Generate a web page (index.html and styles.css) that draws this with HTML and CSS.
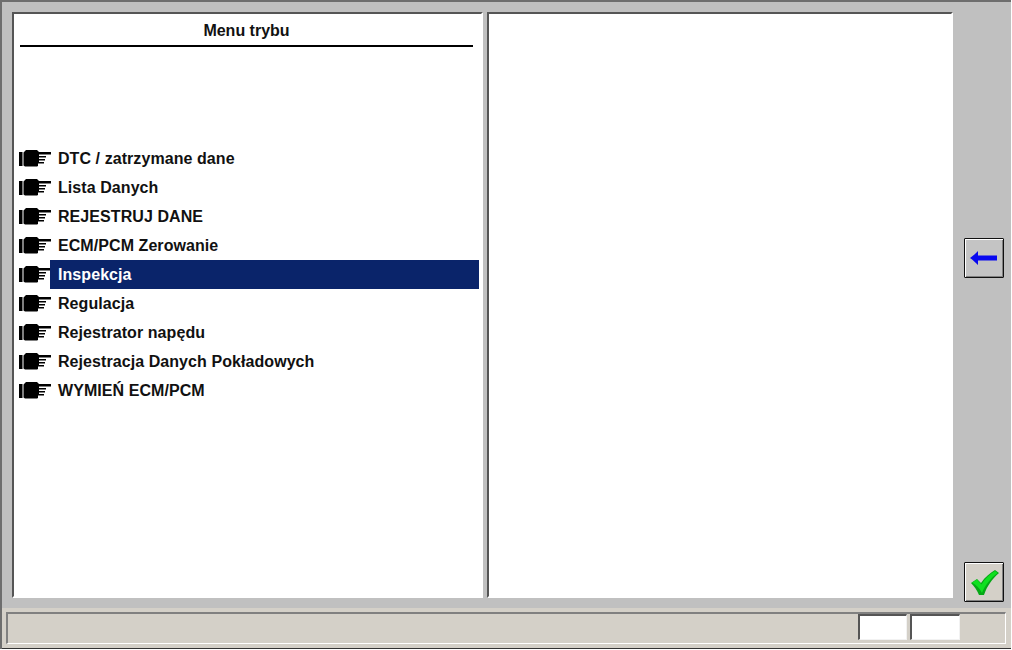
FILE: index.html
```html
<!DOCTYPE html>
<html lang="pl">
<head>
<meta charset="utf-8">
<title>Menu trybu</title>
<link rel="stylesheet" href="styles.css">
</head>
<body>
<svg class="defs" width="0" height="0" aria-hidden="true">
  <symbol id="hand" viewBox="0 0 33 18">
    <path d="M0 3h3.500v14H0zM4.500 3.500L7 1h11l2 2h12v2.500H20V7h7v1.500h-7V10h6v1.500h-6V13h5v1.500h-6V17l-1 .500H6l-1.500-1z" fill="#000"/>
  </symbol>
</svg>
<div class="window">
  <div class="main">
    <section class="panel panel-left">
      <h1 class="title">Menu trybu</h1>
      <ul class="menu">
        <li class="item"><svg class="hand"><use href="#hand"/></svg><span class="label">DTC / zatrzymane dane</span></li>
        <li class="item"><svg class="hand"><use href="#hand"/></svg><span class="label">Lista Danych</span></li>
        <li class="item"><svg class="hand"><use href="#hand"/></svg><span class="label">REJESTRUJ DANE</span></li>
        <li class="item"><svg class="hand"><use href="#hand"/></svg><span class="label">ECM/PCM Zerowanie</span></li>
        <li class="item"><svg class="hand"><use href="#hand"/></svg><span class="label selected">Inspekcja</span></li>
        <li class="item"><svg class="hand"><use href="#hand"/></svg><span class="label">Regulacja</span></li>
        <li class="item"><svg class="hand"><use href="#hand"/></svg><span class="label">Rejestrator napędu</span></li>
        <li class="item"><svg class="hand"><use href="#hand"/></svg><span class="label">Rejestracja Danych Pokładowych</span></li>
        <li class="item"><svg class="hand"><use href="#hand"/></svg><span class="label">WYMIEŃ ECM/PCM</span></li>
      </ul>
    </section>
    <section class="panel panel-right"></section>
    <aside class="side">
      <button class="btn" type="button" aria-label="Wstecz">
        <svg width="28" height="16" viewBox="0 0 28 16"><path d="M0 8c3-2 5-4 8-7v4.500h19v5H8V15C5 12 3 10 0 8z" fill="#0808f0"/></svg>
      </button>
      <button class="btn btn-ok" type="button" aria-label="OK">
        <svg width="32" height="28" viewBox="0 0 32 28"><path d="M3 15l6-4 4 4C17 9 22 5 27 2l4 3C24 11 19 18 16 27h-5C9 22 6 18 3 15z" fill="#06a816"/><path d="M4 14.500l5-3 4.500 5C17 10.500 22 6 27 3l2.500 2C23 10 17 17 14 25 11.500 20 8 17 4 14.500z" fill="#10e020"/></svg>
      </button>
    </aside>
  </div>
  <footer class="statusbar">
    <div class="status">
      <div class="field"></div>
      <div class="field field-wide"></div>
    </div>
  </footer>
</div>
</body>
</html>
```
FILE: styles.css
```css
* { box-sizing: border-box; }
html, body { margin: 0; padding: 0; }
body { width: 1012px; height: 650px; overflow: hidden; background: #fff; font-family: "Liberation Sans", Arial, sans-serif; }
.defs { display: block; height: 0; }
.window {
  width: 1011px;
  height: 649px;
  display: flex;
  flex-direction: column;
  background: #c0c0c0;
  border-top: 2px solid #6e6e6e;
  border-left: 2px solid #6e6e6e;
}
.main {
  flex: 1;
  display: flex;
  padding: 10px 0 10px 10px;
  gap: 4px;
  min-height: 0;
}
.panel {
  background: #fff;
  border-top: 2px solid #555;
  border-left: 2px solid #555;
  border-right: 2px solid #fff;
  border-bottom: 2px solid #fff;
}
.panel-left { width: 471px; }
.panel-right { width: 466px; }
.title {
  margin: 0 8px 0 6px;
  height: 33px;
  line-height: 33px;
  font-size: 16px;
  font-weight: 700;
  text-align: center;
  color: #111;
  border-bottom: 2px solid #000;
}
.menu { list-style: none; margin: 97px 0 0; padding: 0 2px 0 5px; }
.item { display: flex; align-items: center; height: 29px; }
.hand { width: 33px; height: 18px; flex: none; margin: 0 -2px 1px 0; }
.label {
  flex: 1;
  height: 29px;
  line-height: 29px;
  padding-left: 8px;
  font-size: 16px;
  font-weight: 700;
  letter-spacing: 0.07px;
  color: #111;
  white-space: nowrap;
}
.selected { background: #0a246a; color: #fff; }
.side {
  flex: 1;
  display: flex;
  flex-direction: column;
  justify-content: space-between;
  align-items: flex-start;
  padding: 226px 0 0 7px;
}
.btn {
  width: 40px;
  height: 40px;
  padding: 0;
  display: flex;
  align-items: center;
  justify-content: center;
  background: #c4c4c4;
  border: 1px solid #111;
  box-shadow: inset 1px 1px 0 #fff, inset -1px -1px 0 #808080;
  border-radius: 1px;
}
.btn-ok { background: #d4d0c8; margin-bottom: -4px; }
.statusbar {
  height: 41px;
  flex: none;
  background: #d4d0c8;
  padding: 4px 5px 4px 4px;
  border-bottom: 1px solid #333;
}
.status {
  height: 32px;
  border-top: 2px solid #808080;
  border-left: 2px solid #808080;
  border-right: 1px solid #fff;
  border-bottom: 1px solid #fff;
  display: flex;
  justify-content: flex-end;
  gap: 3px;
  padding: 0 45px 0 0;
}
.field {
  width: 49px;
  height: 26px;
  background: #fff;
  border-top: 2px solid #555;
  border-left: 2px solid #555;
  border-right: 1px solid #f2f2f2;
  border-bottom: 1px solid #f2f2f2;
}
.field-wide { width: 50px; }
```
